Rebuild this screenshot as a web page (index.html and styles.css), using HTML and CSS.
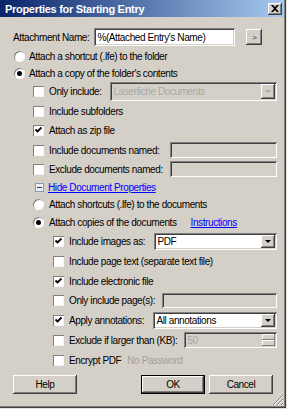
FILE: index.html
```html
<!DOCTYPE html>
<html lang="en">
<head>
  <meta charset="UTF-8">
  <title>Properties for Starting Entry</title>
  <link rel="stylesheet" href="styles.css">
</head>
<body>
  <div class="window">
    <div class="titlebar">
      <span class="title">Properties for Starting Entry</span>
      <span class="close-btn">
        <svg width="8" height="7" viewBox="0 0 8 7"><path d="M0 0h2l2 2 2-2h2L5 3.5 8 7H6L4 5 2 7H0l3-3.5z" fill="#000"/></svg>
      </span>
    </div>

    <div class="form">
      <div class="row top-row">
        <span class="text">Attachment Name:</span>
        <div class="field name-field">%(Attached Entry's Name)</div>
        <div class="btn arrow-btn">&gt;</div>
      </div>
      <div class="row lvl0"><span class="radio"></span>Attach a shortcut (.lfe) to the folder</div>
      <div class="row lvl0"><span class="radio on"></span>Attach a copy of the folder's contents</div>

      <div class="row lvl1">
        <span class="check"></span><span class="text">Only include:</span>
        <div class="select disabled w-type">Laserfiche Documents<span class="drop"></span></div>
      </div>
      <div class="row lvl1"><span class="check"></span>Include subfolders</div>
      <div class="row lvl1"><span class="check on"></span>Attach as zip file</div>
      <div class="row lvl1">
        <span class="check"></span><span class="text">Include documents named:</span>
        <div class="field disabled w-names"></div>
      </div>
      <div class="row lvl1">
        <span class="check"></span><span class="text">Exclude documents named:</span>
        <div class="field disabled w-names"></div>
      </div>
      <div class="row lvl1 link-row"><span class="minus-box"></span><a href="#" class="link">Hide Document Properties</a></div>
      <div class="row lvl1"><span class="radio"></span>Attach shortcuts (.lfe) to the documents</div>
      <div class="row lvl1"><span class="radio on"></span>Attach copies of the documents<a href="#" class="link instr">Instructions</a></div>

      <div class="row lvl2">
        <span class="check on"></span><span class="text">Include images as:</span>
        <div class="select w-images">PDF<span class="drop"></span></div>
      </div>
      <div class="row lvl2"><span class="check"></span>Include page text (separate text file)</div>
      <div class="row lvl2"><span class="check on"></span>Include electronic file</div>
      <div class="row lvl2">
        <span class="check"></span><span class="text">Only include page(s):</span>
        <div class="field disabled w-pages"></div>
      </div>
      <div class="row lvl2">
        <span class="check on"></span><span class="text">Apply annotations:</span>
        <div class="select w-annot">All annotations<span class="drop"></span></div>
      </div>
      <div class="row lvl2">
        <span class="check"></span><span class="text">Exclude if larger than (KB):</span>
        <div class="field disabled spin w-size">50<span class="spin-btns"><span class="up"></span><span class="down"></span></span></div>
      </div>
      <div class="row lvl2"><span class="check"></span>Encrypt PDF<span class="muted">No Password</span></div>
    </div>

    <div class="buttons">
      <div class="btn push">Help</div>
      <div class="btn push default">OK</div>
      <div class="btn push">Cancel</div>
    </div>

    <svg class="grip" width="12" height="12" viewBox="0 0 12 12">
      <path d="M11 1L1 11M11 5L5 11M11 9L9 11" stroke="#808080" stroke-width="1"/>
      <path d="M11 2L2 11M11 6L6 11M11 10L10 11" stroke="#fff" stroke-width="1"/>
    </svg>
  </div>
</body>
</html>
```

FILE: styles.css
```css
* {
  box-sizing: border-box;
}

body {
  margin: 0;
  background-color: #d4d0c8;
  font-family: "Liberation Sans", Arial, sans-serif;
  font-size: 10px;
  letter-spacing: -0.4px;
  color: #000;
}

.window {
  position: relative;
  width: 287px;
  height: 409px;
  background-color: #d4d0c8;
  box-shadow: inset -1px -1px #e4e2dc, inset -2px -2px #404040, inset -3px -3px #808080;
}

/* barra de titulo */
.titlebar {
  display: flex;
  align-items: center;
  justify-content: space-between;
  height: 17px;
  margin-right: 3px;
  padding: 0 2px 0 5px;
  background: linear-gradient(90deg, #0a246a, #a6caf0);
}

.title {
  font-weight: bold;
  font-size: 11px;
  letter-spacing: -0.3px;
  color: #fff;
}

.close-btn {
  display: flex;
  align-items: center;
  justify-content: center;
  width: 14px;
  height: 12px;
  background-color: #d4d0c8;
  box-shadow: inset -1px -1px #404040, inset 1px 1px #fff, inset -2px -2px #808080;
}

/* filas del formulario */
.form {
  display: grid;
  grid-template-rows: 18px 20px 14px 22px 18px 20px 20px 18px 18px 16px 20px 18px 22px 18px 20px 20px 20px 20px;
  padding-top: 11px;
}

.row {
  display: flex;
  align-items: center;
  gap: 5px;
  padding-right: 14px;
  white-space: nowrap;
}

.row .text {
  min-width: 0;
}

.top-row {
  padding-left: 13px;
  padding-right: 29px;
}

.lvl0 {
  padding-left: 14px;
  gap: 4px;
}

.lvl1 {
  padding-left: 33px;
}

.lvl2 {
  padding-left: 53px;
}

.link-row {
  padding-left: 35px;
  gap: 4px;
}

/* controles */
.radio,
.check {
  flex: none;
  width: 11px;
  height: 11px;
  background-color: #fff;
  box-shadow: inset 1px 1px #808080, inset -1px -1px #f4f4f4;
}

.radio {
  border-radius: 50%;
  display: flex;
  align-items: center;
  justify-content: center;
}

.radio.on::after {
  content: "";
  width: 5px;
  height: 5px;
  border-radius: 50%;
  background-color: #000;
}

.check.on {
  background: #fff url("data:image/svg+xml,%3Csvg xmlns='http://www.w3.org/2000/svg' width='11' height='11'%3E%3Cpath d='M2.5 4.5l2 2 4-4' fill='none' stroke='%23000' stroke-width='1.8'/%3E%3C/svg%3E") no-repeat;
}

.field,
.select {
  position: relative;
  flex: none;
  height: 17px;
  margin-left: auto;
  padding: 0 3px;
  display: flex;
  align-items: center;
  background-color: #fff;
  box-shadow: inset 1px 1px #808080, inset -1px -1px #fff, inset 2px 2px #404040, inset -2px -2px #d4d0c8;
}

.field.disabled,
.select.disabled {
  background-color: #d4d0c8;
  color: #a8a8a8;
}

.name-field {
  width: 141px;
  height: 18px;
}

.select .drop {
  position: absolute;
  top: 2px;
  right: 2px;
  bottom: 2px;
  width: 14px;
  background-color: #d4d0c8;
  box-shadow: inset -1px -1px #404040, inset 1px 1px #fff, inset -2px -2px #808080;
  display: flex;
  align-items: center;
  justify-content: center;
}

.select .drop::after {
  content: "";
  border-left: 3px solid transparent;
  border-right: 3px solid transparent;
  border-top: 3px solid #000;
}

.select.disabled .drop::after {
  border-top-color: #a8a8a8;
}

.w-type { width: 167px; height: 19px; }
.w-names { width: 107px; height: 16px; }
.w-images { width: 123px; }
.w-pages { width: 115px; height: 15px; }
.w-annot { width: 124px; }
.w-size { width: 93px; height: 16px; }

.spin-btns {
  position: absolute;
  top: 2px;
  right: 2px;
  bottom: 2px;
  width: 13px;
  display: flex;
  flex-direction: column;
}

.spin-btns span {
  flex: 1;
  background-color: #d4d0c8;
  box-shadow: inset -1px -1px #808080, inset 1px 1px #fff;
}

.btn {
  display: flex;
  align-items: center;
  justify-content: center;
  background-color: #d4d0c8;
  box-shadow: inset -1px -1px #404040, inset 1px 1px #fff, inset -2px -2px #808080;
}

.arrow-btn {
  width: 16px;
  height: 16px;
  margin-left: 6px;
  font-size: 8px;
  color: #333;
}

.link {
  color: #0000ff;
  text-decoration: underline;
}

.instr {
  margin-left: 9px;
}

.minus-box {
  flex: none;
  width: 9px;
  height: 9px;
  border: 1px solid #7f9db9;
  background-color: #f0f0f0;
  display: flex;
  align-items: center;
  justify-content: center;
}

.minus-box::after {
  content: "";
  width: 5px;
  height: 1px;
  background-color: #203070;
}

.muted {
  margin-left: 1px;
  color: #a0a0a0;
}

/* botones de abajo */
.buttons {
  display: flex;
  gap: 4px;
  margin-top: 5px;
  padding: 0 14px 0 13px;
}

.push {
  width: 64px;
  height: 19px;
}

.push:first-child {
  margin-right: auto;
}

.push.default {
  border: 1px solid #000;
}

.grip {
  position: absolute;
  right: 3px;
  bottom: 3px;
}
```
